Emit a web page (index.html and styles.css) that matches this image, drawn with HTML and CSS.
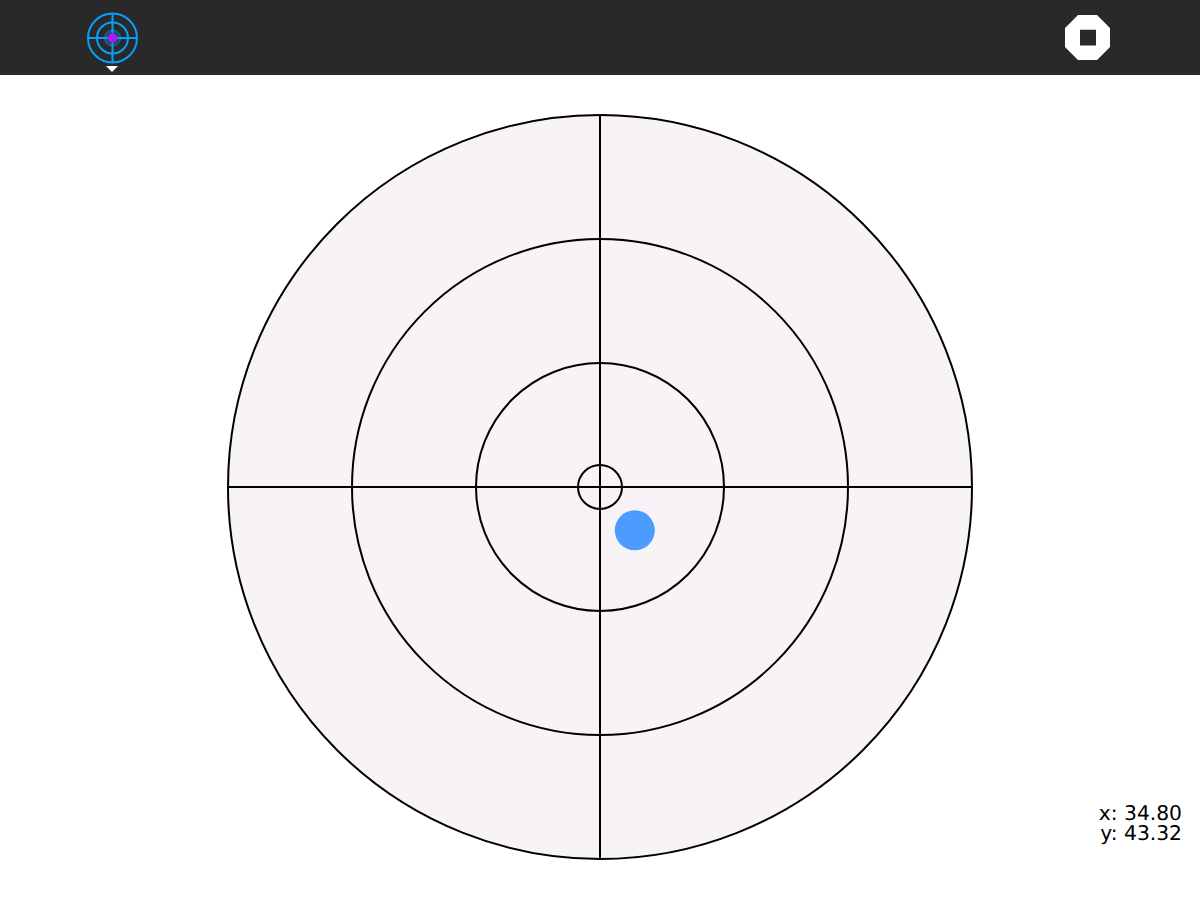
FILE: index.html
```html
<!DOCTYPE html>
<html lang="en">
<head>
<meta charset="utf-8">
<title>Target</title>
<link rel="stylesheet" href="styles.css">
</head>
<body>
<header class="toolbar">
  <button class="tool tool-target" type="button" aria-label="Target">
    <svg class="target-icon" width="52" height="52" viewBox="0 0 52 52">
      <g fill="none" stroke="#069ffa" stroke-width="2">
        <circle cx="26.500" cy="26" r="24.500"/>
        <circle cx="26.500" cy="26" r="15.500"/>
        <path d="M26.500 1.500V50.500M2 26H51"/>
        <circle cx="26.500" cy="26" r="8" stroke-width="0.700"/>
        <circle cx="26.500" cy="26" r="6.500" stroke-width="0.700"/>
      </g>
      <circle cx="26.500" cy="26" r="5" fill="#a020f0"/>
    </svg>
    <svg class="caret" width="12" height="6" viewBox="0 0 12 6"><path d="M0 0H12L6 6Z" fill="#fff"/></svg>
  </button>
  <button class="tool tool-stop" type="button" aria-label="Stop">
    <svg width="45" height="45" viewBox="0 0 45 45">
      <path fill-rule="evenodd" fill="#fff" d="M13 0H32L45 13V32L32 45H13L0 32V13ZM15 14.700V30.500H31V14.700Z"/>
    </svg>
  </button>
</header>
<main class="stage">
  <svg class="plot" width="746" height="746" viewBox="-373 -373 746 746">
    <g fill="none" stroke="#000" stroke-width="2">
      <circle r="372" fill="#f7f3f7"/>
      <circle r="248"/>
      <circle r="124"/>
      <circle r="22"/>
      <path d="M0 -372V372M-372 0H372"/>
    </g>
    <circle cx="34.800" cy="43.320" r="20" fill="#4c9bff"/>
  </svg>
  <div class="readout">
    <div>x: 34.80</div>
    <div>y: 43.32</div>
  </div>
</main>
</body>
</html>
```
FILE: styles.css
```css
html, body {
  margin: 0;
  padding: 0;
  height: 100%;
  background: #fff;
}
body {
  display: flex;
  flex-direction: column;
  height: 900px;
  overflow: hidden;
  font-family: "DejaVu Sans", sans-serif;
}
.toolbar {
  flex: 0 0 75px;
  display: flex;
  align-items: flex-start;
  justify-content: space-between;
  background: #292929;
  padding: 12px 90px 0 86px;
  box-sizing: border-box;
}
.tool {
  border: 0;
  padding: 0;
  margin: 0;
  background: none;
  display: flex;
  flex-direction: column;
  align-items: center;
}
.tool svg { display: block; }
.caret { margin-top: 2px; }
.tool-stop { margin-top: 3px; }
.stage {
  flex: 1;
  position: relative;
  display: flex;
  justify-content: center;
  padding-top: 39px;
}
.plot { display: block; }
.readout {
  position: absolute;
  right: 18px;
  top: 728px;
  font-size: 20.250px;
  line-height: 20px;
  color: #000;
  text-align: right;
  text-rendering: geometricPrecision;
}
```
